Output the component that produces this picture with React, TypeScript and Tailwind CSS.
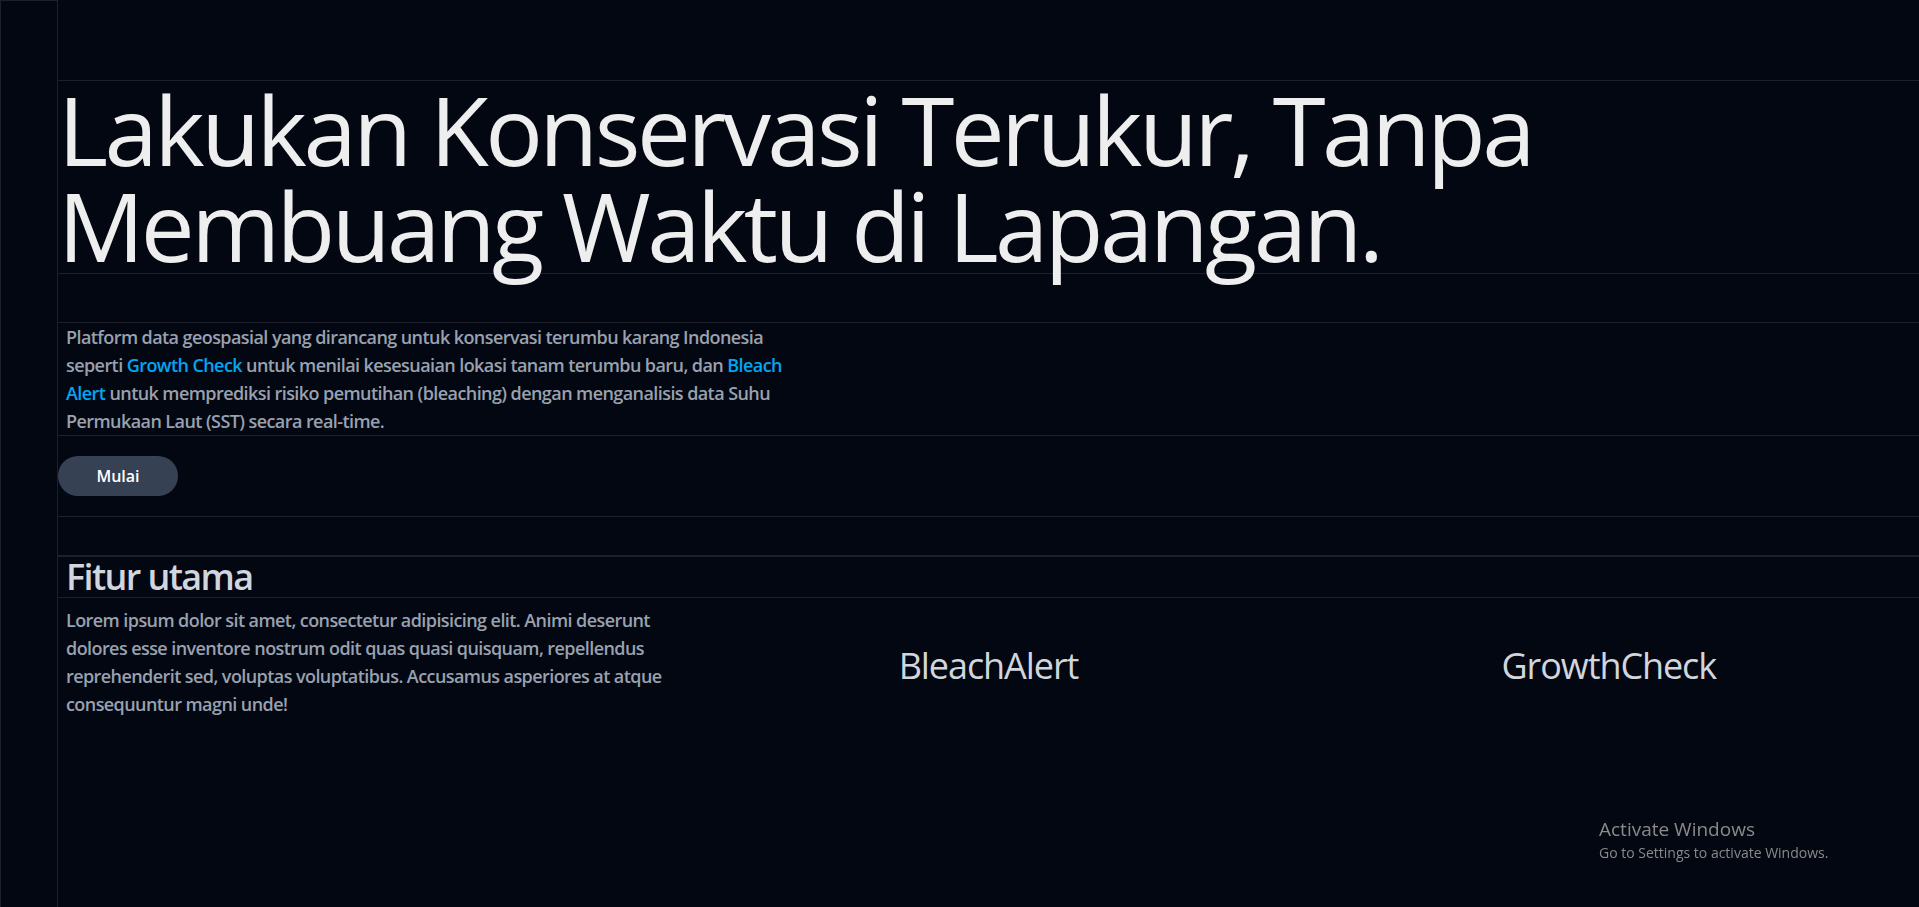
import React from 'react';

const features = ['BleachAlert', 'GrowthCheck'];

export default function App() {
  return (
    <div
      className="flex min-h-screen bg-[#030712] text-gray-400"
      style={{ fontFamily: '"Open Sans", "Noto Sans", sans-serif' }}
    >
      {/* sidebar */}
      <aside className="h-screen w-[58px] shrink-0 border-l border-t border-r border-[#1d202b]" />

      <main className="flex min-w-0 flex-1 flex-col">
        <header className="h-[81px] border-b border-[#1d202b]" />

        <h1 className="border-b border-[#1d202b] text-8xl leading-none tracking-[-0.037em] text-[#eeeeee]">
          Lakukan Konservasi Terukur, Tanpa Membuang Waktu di Lapangan.
        </h1>

        <div className="h-[49px] border-b border-[#1d202b]" />

        <div className="border-b border-[#1d202b]">
          <p className="max-w-[768px] px-2 text-lg leading-7 font-semibold tracking-[-0.032em] text-gray-400">
            Platform data geospasial yang dirancang untuk konservasi terumbu karang Indonesia seperti{' '}
            <span className="text-sky-500">Growth Check</span> untuk menilai kesesuaian lokasi tanam terumbu baru, dan{' '}
            <span className="text-sky-500">Bleach Alert</span> untuk memprediksi risiko pemutihan (bleaching) dengan
            menganalisis data Suhu Permukaan Laut (SST) secara real-time.
          </p>
        </div>

        <div className="border-b border-[#1d202b] py-5">
          <button className="h-10 w-[120px] rounded-full bg-gray-700 text-base font-semibold text-white">
            Mulai
          </button>
        </div>

        <div className="h-[40px] border-b-2 border-[#1d202b]" />

        <h2 className="border-b border-[#1d202b] px-2 text-4xl leading-10 font-semibold tracking-[-0.045em] text-gray-300">
          Fitur utama
        </h2>

        <section className="grid grid-cols-3 items-center">
          <p className="p-2 text-lg leading-7 font-semibold tracking-[-0.032em] text-gray-400">
            Lorem ipsum dolor sit amet, consectetur adipisicing elit. Animi deserunt dolores esse inventore nostrum
            odit quas quasi quisquam, repellendus reprehenderit sed, voluptas voluptatibus. Accusamus asperiores at
            atque consequuntur magni unde!
          </p>
          {features.map((f) => (
            <div key={f} className="pt-2 text-center text-4xl leading-10 tracking-[-0.03em] text-gray-300">
              {f}
            </div>
          ))}
        </section>
      </main>

      {/* windows watermark */}
      <div className="pointer-events-none fixed left-[1599px] top-[815px] text-[#8a8a8a]">
        <div className="text-[19px] leading-7">Activate Windows</div>
        <div className="text-sm leading-5">Go to Settings to activate Windows.</div>
      </div>
    </div>
  );
}
